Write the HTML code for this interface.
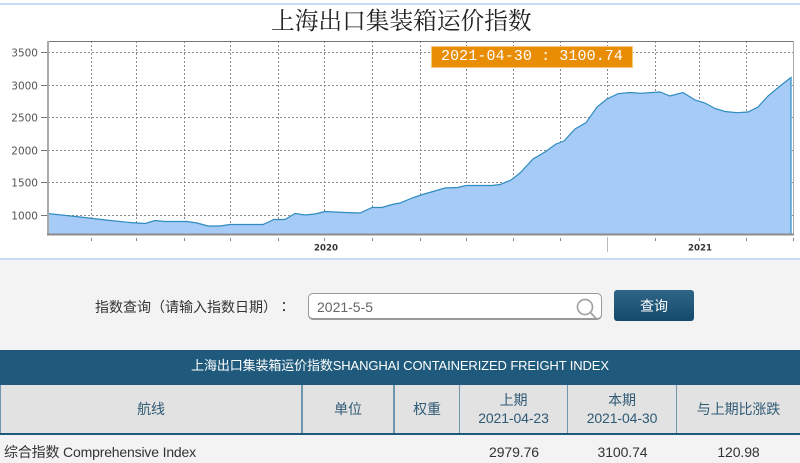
<!DOCTYPE html>
<html><head><meta charset="utf-8"><style>
html,body{margin:0;padding:0;width:800px;height:463px;overflow:hidden;background:#f3f3f3}
body{position:relative;font-family:"Liberation Sans","Noto Sans CJK SC",sans-serif;color:#333;text-spacing-trim:space-all}
.a{position:absolute;white-space:nowrap}
.c{position:absolute;text-align:center;background:#e2e2e2;color:#2f5a75;font-size:14px;line-height:18px;display:flex;flex-direction:column;justify-content:center;top:385px;height:48px;letter-spacing:-.1px}
.n{position:absolute;top:443px;font-size:14px;line-height:18px;text-align:center;color:#333;letter-spacing:-.1px}
</style></head><body>
<div class="a" style="left:0;top:0;width:800px;height:259px;background:#fff"></div>
<div class="a" style="left:0;top:3px;width:800px;height:2px;background:#c6dcf6"></div>
<div class="a" style="left:0;top:258px;width:800px;height:2px;background:#c6dcf6"></div>
<div class="a" style="left:271px;top:6px;font:23.7px/32px 'Liberation Serif','Noto Serif CJK SC',serif;color:#222">上海出口集装箱运价指数</div>
<svg class="a" style="left:0;top:0" width="800" height="259" viewBox="0 0 800 259">
<g stroke="#8a8a8a" stroke-width="1" stroke-dasharray="2 2" fill="none" shape-rendering="crispEdges">
<path d="M48 52.5H793M48 85.5H793M48 117.5H793M48 150.5H793M48 182.5H793M48 215.5H793"/>
<path d="M91.5 41V234M136.5 41V234M184.5 41V234M230.5 41V234M278.5 41V234M324.5 41V234M372.5 41V234M420.5 41V234M466.5 41V234M513.5 41V234M560.5 41V234M607.5 41V234M655.5 41V234M699.5 41V234M746.5 41V234"/>
</g>
<path fill="#a5cbf6" d="M48 213.5L80 217L110 220.5L130 222.5L145 223.5L155 220.5L165 221.5L187 221.5L197 223L208 226L220 226L230 224.5L263 224.5L274 219.5L285 219.5L295 213.5L305 215L315 214L325 211.5L345 212.5L360 213L372 207.5L382 207.5L392 204.5L400 203L412 198L421 195L445 188L458 187.5L466 185.5L492 185.5L500 184.5L511 180L520 173L533 159L545 152L556 144L564 141L575 129L586 122.7L597 107L607 99L618 93.7L630 92.5L640 93.3L660 92L670 96L683 92.5L695 100L705 103L715 108.5L725 111.5L737 112.7L748 112L758 107L768 96L780 86L791 77.5V234H48Z"/>
<path fill="none" stroke="#2f8bc0" stroke-width="1.2" d="M48 234V213.5L80 217L110 220.5L130 222.5L145 223.5L155 220.5L165 221.5L187 221.5L197 223L208 226L220 226L230 224.5L263 224.5L274 219.5L285 219.5L295 213.5L305 215L315 214L325 211.5L345 212.5L360 213L372 207.5L382 207.5L392 204.5L400 203L412 198L421 195L445 188L458 187.5L466 185.5L492 185.5L500 184.5L511 180L520 173L533 159L545 152L556 144L564 141L575 129L586 122.7L597 107L607 99L618 93.7L630 92.5L640 93.3L660 92L670 96L683 92.5L695 100L705 103L715 108.5L725 111.5L737 112.7L748 112L758 107L768 96L780 86L791 77.5V234"/>
<g fill="none" shape-rendering="crispEdges">
<path stroke="#777" d="M48 41.5H793"/>
<path stroke="#aaa" stroke-width="2" d="M48 41V234"/>
<path stroke="#aaa" stroke-width="1" d="M793.5 41V234"/>
<path stroke="#8c8c8c" stroke-width="2" d="M47 234.5H794"/>
<path stroke="#777" d="M41 52.5H47M41 85.5H47M41 117.5H47M41 150.5H47M41 182.5H47M41 215.5H47"/>
<path stroke="#888" d="M91.5 238V241M136.5 238V241M184.5 238V241M230.5 238V241M278.5 238V241M324.5 238V241M372.5 238V241M420.5 238V241M466.5 238V241M513.5 238V241M560.5 238V241M655.5 238V241M699.5 238V241M746.5 238V241M793.5 238V241"/>
<path stroke="#bbb" d="M607.5 237V252"/>
</g>
<g font-family="DejaVu Sans" font-size="10.5" fill="#555" text-anchor="end">
<text x="38" y="56.5">3500</text><text x="38" y="89.5">3000</text><text x="38" y="121.5">2500</text><text x="38" y="154.5">2000</text><text x="38" y="186.5">1500</text><text x="38" y="219.5">1000</text>
</g>
<g font-family="DejaVu Sans" font-size="8.6" font-weight="bold" fill="#333" text-anchor="middle">
<text x="326" y="250.5">2020</text><text x="700" y="250.5">2021</text>
</g>
</svg>
<div class="a" style="left:431px;top:46px;width:200px;height:20px;background:#e98c00;border:1px solid #f5c878;color:#fff;font:15px/20px 'Liberation Mono',monospace;text-align:center;letter-spacing:.1px;padding-left:0;opacity:.98">2021-04-30 : 3100.74</div>

<div class="a" style="left:95px;top:298px;font-size:14px;line-height:18px;color:#333">指数查询（请输入指数日期）<span style="font-family:'Noto Sans CJK TC',sans-serif">：</span></div>
<div class="a" style="left:308px;top:293px;width:292px;height:24px;background:#fff;border:1px solid #999;border-bottom-width:2px;border-radius:5px"></div>
<div class="a" style="left:317px;top:298px;font-size:14px;line-height:18px;color:#666">2021-5-5</div>
<svg class="a" style="left:574px;top:295px" width="26" height="26" viewBox="0 0 26 26"><circle cx="11" cy="12" r="7.5" fill="none" stroke="#a3a3a3" stroke-width="1.7"/><path d="M16.5 17.5L22 23.5" stroke="#a3a3a3" stroke-width="1.8"/></svg>
<div class="a" style="left:614px;top:290px;width:80px;height:31px;border-radius:3px;background:linear-gradient(#2f6587,#134a6b);color:#fff;font-size:14px;line-height:33px;text-align:center">查询</div>

<div class="a" style="left:0;top:350px;width:800px;height:35px;background:#1f5a7c;color:#fff;font-size:13px;line-height:31px;text-align:center;letter-spacing:-.12px">上海出口集装箱运价指数SHANGHAI CONTAINERIZED FREIGHT INDEX</div>
<div class="a" style="left:0;top:385px;width:800px;height:48px;background:#6f97ad"></div>
<div class="a" style="left:0;top:433px;width:800px;height:2px;background:#1f5a7c"></div>
<div class="c" style="left:1px;width:300px">航线</div>
<div class="c" style="left:303px;width:90px">单位</div>
<div class="c" style="left:395px;width:64px">权重</div>
<div class="c" style="left:460px;width:107px"><span>上期</span><span>2021-04-23</span></div>
<div class="c" style="left:568px;width:108px"><span>本期</span><span>2021-04-30</span></div>
<div class="c" style="left:677px;width:123px">与上期比涨跌</div>
<div class="a" style="left:4px;top:443px;font-size:14px;line-height:18px;color:#333;letter-spacing:-.17px">综合指数 Comprehensive Index</div>
<div class="n" style="left:461px;width:106px">2979.76</div>
<div class="n" style="left:569px;width:107px">3100.74</div>
<div class="n" style="left:677px;width:123px">120.98</div>
</body></html>
